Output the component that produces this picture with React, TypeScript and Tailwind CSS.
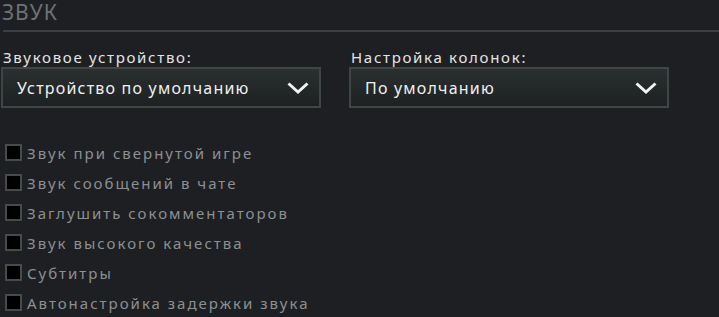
const options = [
  "Звук при свернутой игре",
  "Звук сообщений в чате",
  "Заглушить сокомментаторов",
  "Звук высокого качества",
  "Субтитры",
  "Автонастройка задержки звука",
];

function Dropdown({ label, value }: { label: string; value: string }) {
  return (
    <div className="flex w-[320px] flex-col">
      <div className="h-[23px] pl-[2px] text-[15px] leading-[26px] tracking-[1.7px] text-[#e4e6e6]">
        {label}
      </div>
      <div className="flex h-[41px] items-center justify-between border-2 border-[#3f4646] bg-gradient-to-b from-[#2a2f30] to-[#1d2122] pl-[14px] pr-[10px]">
        <span className="text-[16px] tracking-[1.2px] text-[#f0f0f0]">{value}</span>
        <svg width="22" height="12" viewBox="0 0 22 12">
          <path d="M1.5 1.5 L11 10 L20.5 1.5" fill="none" stroke="#f2f2f2" strokeWidth="3" />
        </svg>
      </div>
    </div>
  );
}

export default function App() {
  return (
    <div className="h-[317px] w-[719px] overflow-hidden bg-[#1e1f22] font-['Noto_Sans',sans-serif]">
      <div className="h-[30px] pl-[2px] text-[21px] leading-[24px] tracking-[1px] text-[#6c7275]">
        ЗВУК
      </div>
      <div className="ml-[3px] h-[2px] bg-[#3b3f42]" />
      <div className="mt-[12px] flex gap-[28px] pl-[1px]">
        <Dropdown label="Звуковое устройство:" value="Устройство по умолчанию" />
        <Dropdown label="Настройка колонок:" value="По умолчанию" />
      </div>
      <div className="mt-[36px] flex flex-col pl-[5px]">
        {options.map((o) => (
          <label key={o} className="flex h-[30px] items-start gap-[5px]">
            <span className="h-[17px] w-[17px] shrink-0 border-2 border-[#454b4b] bg-black" />
            <span className="-mt-[2px] text-[15px] tracking-[2px] text-[#8b9093]">{o}</span>
          </label>
        ))}
      </div>
    </div>
  );
}
